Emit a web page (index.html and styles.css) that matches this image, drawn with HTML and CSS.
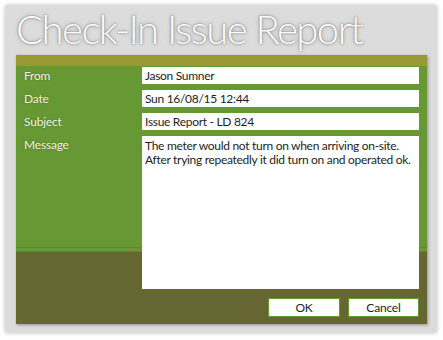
FILE: index.html
```html
<!DOCTYPE html>
<html>
<head>
<meta charset="utf-8">
<link rel="stylesheet" href="styles.css">
</head>
<body>
<div class="window">
  <div class="title">Check-In Issue Report</div>
  <div class="panel">
    <div class="form">
      <div class="label">From</div>
      <div class="field">Jason Sumner</div>
      <div class="label">Date</div>
      <div class="field">Sun 16/08/15 12:44</div>
      <div class="label">Subject</div>
      <div class="field">Issue Report - LD 824</div>
      <div class="label">Message</div>
      <div class="field message">The meter would not turn on when arriving on-site.<br>After trying repeatedly it did turn on and operated ok.</div>
    </div>
    <div class="buttons">
      <div class="btn">OK</div>
      <div class="btn">Cancel</div>
    </div>
  </div>
</div>
</body>
</html>
```
FILE: styles.css
```css
html, body {
  margin: 0;
  padding: 0;
  background: #ffffff;
}
body {
  width: 443px;
  height: 340px;
  overflow: hidden;
  font-family: Lato, "Open Sans", sans-serif;
}
.window {
  margin: 5px 0 0 5px;
  width: 432px;
  height: 328px;
  box-sizing: border-box;
  background: #dcdcdc;
  border-radius: 3px;
  box-shadow: 0 0 4px rgba(0,0,0,0.25);
  padding: 0 0 0 11px;
  display: flex;
  flex-direction: column;
}
.title {
  height: 50px;
  font-family: Lato, "Open Sans", sans-serif;
  font-weight: 300;
  font-size: 40px;
  line-height: 48px;
  letter-spacing: -1.5px;
  color: #ffffff;
  text-shadow: 0 0 2px rgba(0,0,0,0.45), 0 0 4px rgba(0,0,0,0.25);
  white-space: nowrap;
}
.panel {
  width: 411px;
  height: 269px;
  box-sizing: border-box;
  padding: 12px 8px 7px 0;
  background: linear-gradient(to bottom,
    #999933 0px, #999933 11px,
    #669933 11px, #669933 192px,
    #7a7a30 192px, #7a7a30 193px,
    #669933 193px, #669933 196px,
    #7a7a30 196px, #7a7a30 197px,
    #666633 197px, #666633 100%);
  box-shadow: 1px 1px 3px rgba(0,0,0,0.35);
  display: flex;
  flex-direction: column;
  justify-content: space-between;
}
.form {
  display: grid;
  grid-template-columns: 126px 277px;
  grid-template-rows: 17px 17px 17px 153px;
  row-gap: 6px;
}
.label {
  padding-left: 8px;
  font-size: 12px;
  line-height: 17px;
  letter-spacing: -0.2px;
  color: #eef2e6;
  text-shadow: 0 0 2px rgba(60,80,20,0.6);
}
.field {
  background: #ffffff;
  font-size: 12px;
  line-height: 17px;
  letter-spacing: -0.3px;
  color: #1e1e1e;
  padding: 0 3px;
  white-space: nowrap;
  overflow: hidden;
}
.message {
  line-height: 13.5px;
  padding-top: 3px;
}
.buttons {
  display: flex;
  justify-content: flex-end;
  gap: 8px;
}
.btn {
  height: 19px;
  box-sizing: border-box;
  background: #ffffff;
  border: 1px solid #5f9a2a;
  font-size: 12px;
  line-height: 17px;
  letter-spacing: -0.2px;
  text-align: center;
  color: #1e1e1e;
}
.btn:first-child { width: 72px; }
.btn:last-child { width: 71px; }
```
